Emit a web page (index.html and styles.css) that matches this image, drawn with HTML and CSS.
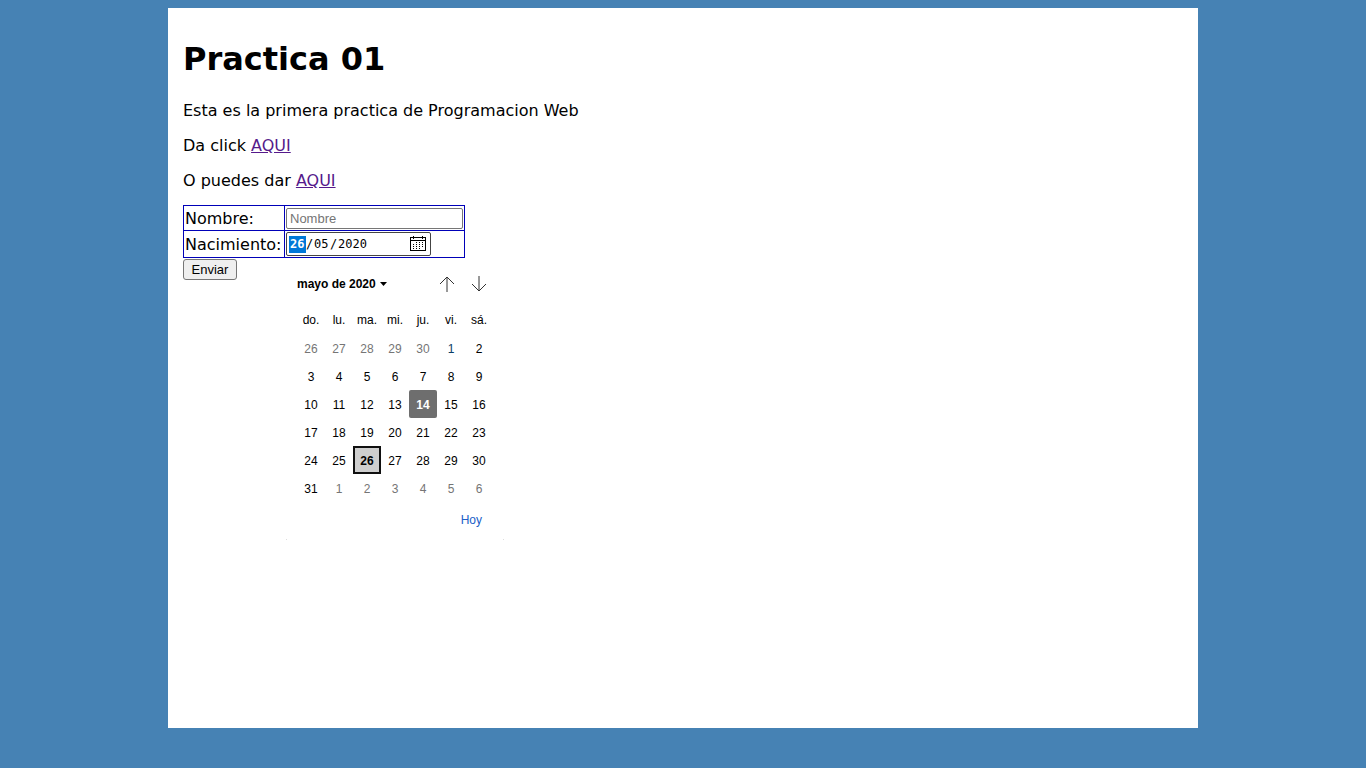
FILE: index.html
```html
<!DOCTYPE html>
<html lang="es">
<head>
<meta charset="utf-8">
<title>Practica 01</title>
<link rel="stylesheet" href="styles.css">
</head>
<body>
<main class="page">
  <h1 class="title">Practica 01</h1>
  <p class="text">Esta es la primera practica de Programacion Web</p>
  <p class="text">Da click <a class="link" href="#">AQUI</a></p>
  <p class="text">O puedes dar <a class="link" href="#">AQUI</a></p>
  <form class="form">
    <table class="fields">
      <tr>
        <td><label for="nombre">Nombre:</label></td>
        <td><input class="name" id="nombre" type="text" placeholder="Nombre"></td>
      </tr>
      <tr>
        <td><label for="dia">Nacimiento:</label></td>
        <td>
          <div class="picker">
            <div class="date">
              <input class="part selected" id="dia" type="text" value="26" aria-label="Nacimiento: día"><span class="slash">/</span><input class="part" type="text" value="05" aria-label="Mes"><span class="slash">/</span><input class="part year" type="text" value="2020" aria-label="Año">
              <button class="open" type="button" aria-label="Mostrar calendario">
                <svg width="16" height="16" viewBox="0 0 16 16" shape-rendering="crispEdges"><path d="M0 1h16v14H0zM1 2v2h14V2zM1 5v9h14V5z" fill="#000" fill-rule="evenodd"/><path d="M3 0h1v3H3zM12 0h1v3h-1z"/><path d="M3.500 8v5M6.500 6v7M9.500 6v7M12.500 6v5" stroke="#000" stroke-dasharray="1 1"/></svg>
              </button>
            </div>
            <div class="calendar">
              <div class="bar">
                <button class="month" type="button">mayo de 2020 <svg width="7" height="4" viewBox="0 0 7 4"><path d="M0 0h7L3.500 4z"/></svg></button>
                <button class="arrow" type="button" aria-label="Mes anterior"><svg width="16" height="16" viewBox="0 0 16 16"><path d="M8 16V1M1 8l7-7 7 7" fill="none" stroke="#333"/></svg></button>
                <button class="arrow" type="button" aria-label="Mes siguiente"><svg width="16" height="16" viewBox="0 0 16 16"><path d="M8 0v15M1 8l7 7 7-7" fill="none" stroke="#333"/></svg></button>
              </div>
              <table class="days">
                <thead><tr><th>do.</th><th>lu.</th><th>ma.</th><th>mi.</th><th>ju.</th><th>vi.</th><th>sá.</th></tr></thead>
                <tbody>
                <tr><td class="other">26</td><td class="other">27</td><td class="other">28</td><td class="other">29</td><td class="other">30</td><td class="first">1</td><td>2</td></tr>
                <tr><td>3</td><td>4</td><td>5</td><td>6</td><td>7</td><td>8</td><td>9</td></tr>
                <tr><td>10</td><td>11</td><td>12</td><td>13</td><td class="today">14</td><td>15</td><td>16</td></tr>
                <tr><td>17</td><td>18</td><td>19</td><td>20</td><td>21</td><td>22</td><td>23</td></tr>
                <tr><td>24</td><td>25</td><td class="chosen">26</td><td>27</td><td>28</td><td>29</td><td>30</td></tr>
                <tr><td>31</td><td class="other">1</td><td class="other">2</td><td class="other">3</td><td class="other">4</td><td class="other">5</td><td class="other">6</td></tr>
                </tbody>
              </table>
              <div class="foot"><button class="now" type="button">Hoy</button></div>
              <div class="corners"><i class="dot"></i><i class="dot"></i></div>
            </div>
          </div>
        </td>
      </tr>
    </table>
    <button class="send" type="submit">Enviar</button>
  </form>
</main>
</body>
</html>
```
FILE: styles.css
```css
* { box-sizing: border-box; }
body {
  margin: 8px;
  background: #4682b4;
  color: #000;
  font: 16px/19px Verdana, "DejaVu Sans", sans-serif;
}
.page {
  max-width: 1030px;
  min-height: 720px;
  margin: 0 auto;
  padding: 32px 15px 15px;
  background: #fff;
}
.title { margin: 0 0 22px; font-size: 32px; line-height: 39px; }
.text { margin: 0 0 16px; }
.text:last-of-type { margin-bottom: 15px; }
.link { color: #551a8b; }
.fields { border-collapse: collapse; }
.fields > tbody > tr > td { border: 1px solid #0000b8; padding: 1px; vertical-align: middle; }
.fields > tbody > tr > td:first-child { min-width: 101px; padding-right: 2px; }
.name {
  display: block;
  width: 177px;
  height: 21px;
  margin: 1px 0 0;
  padding: 1px 3px;
  border: 1px solid #767676;
  border-radius: 2px;
  font: 13px "Liberation Sans", Arial, sans-serif;
}
.name::placeholder { color: #757575; }
.picker { position: relative; }
.date {
  display: flex;
  align-items: center;
  width: 145px;
  height: 24px;
  padding: 0 4px 0 2px;
  border: 1px solid #444;
  border-radius: 2px;
  font: 12px/16px "DejaVu Sans Mono", monospace;
}
.part {
  width: 17px;
  height: 17px;
  padding: 0 1px;
  border: 0;
  background: none;
  color: #000;
  font: inherit;
}
.year { width: 34px; }
.slash { width: 7px; text-align: center; }
.selected { background: #0078d7; color: #fff; font-weight: bold; }
button { padding: 0; border: 0; background: none; color: inherit; font: inherit; }
.open { display: flex; margin-left: auto; }
.calendar {
  position: absolute;
  top: 100%;
  left: 0;
  width: 218px;
  margin-top: 4px;
  padding-top: 15px;
  background: #fff;
  font: 12px/16px "Liberation Sans", Arial, sans-serif;
}
.bar { display: flex; align-items: center; padding: 0 17px 0 11px; gap: 16px; }
.month { display: flex; align-items: center; gap: 4px; margin-right: auto; font-weight: bold; }
.arrow { display: flex; padding-top: 1px; }
.days { margin: 14px 0 0 11px; border-collapse: collapse; }
.days th, .days td { width: 28px; height: 28px; padding: 0; text-align: center; font-weight: normal; }
.days td { padding-top: 2px; }
.days .other { color: #757575; }
.days .first { color: #0a3c66; }
.days .today { background: #6e6e6e; border-radius: 2px; color: #fff; font-weight: bold; }
.days .chosen {
  outline: 2px solid #101010;
  outline-offset: -2px;
  background: #cecece;
  font-weight: bold;
}
.foot { padding: 10px 22px 11px; text-align: right; }
.now { color: #2060c8; }
.corners { display: flex; justify-content: space-between; }
.dot { width: 1px; height: 1px; background: #ddd; }
.send {
  display: block;
  min-width: 54px;
  margin-top: 1px;
  padding: 0 7px;
  border: 1px solid #767676;
  border-radius: 3px;
  background: #efefef;
  font: 13px/19px "Liberation Sans", Arial, sans-serif;
}
```
